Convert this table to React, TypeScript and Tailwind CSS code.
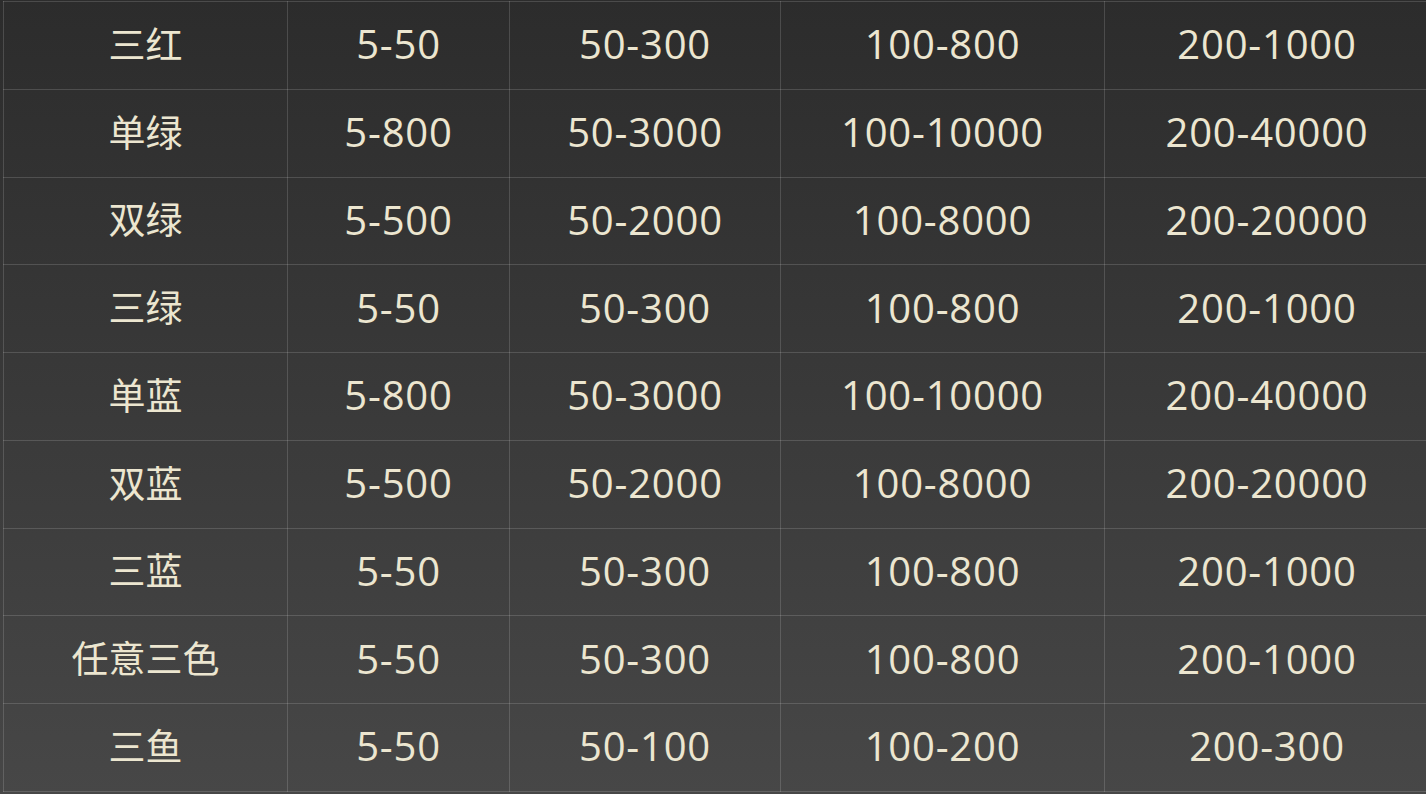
const rows: [string, string, string, string, string][] = [
  ['三红', '5-50', '50-300', '100-800', '200-1000'],
  ['单绿', '5-800', '50-3000', '100-10000', '200-40000'],
  ['双绿', '5-500', '50-2000', '100-8000', '200-20000'],
  ['三绿', '5-50', '50-300', '100-800', '200-1000'],
  ['单蓝', '5-800', '50-3000', '100-10000', '200-40000'],
  ['双蓝', '5-500', '50-2000', '100-8000', '200-20000'],
  ['三蓝', '5-50', '50-300', '100-800', '200-1000'],
  ['任意三色', '5-50', '50-300', '100-800', '200-1000'],
  ['三鱼', '5-50', '50-100', '100-200', '200-300'],
]

export default function App() {
  return (
    <div
      className="h-[794px] w-[1426px] overflow-hidden bg-gradient-to-b from-[#2c2c2c] to-[#474747] pl-[3px] pt-px text-[#ece6d0]"
      style={{ fontFamily: '"Open Sans", "Noto Sans CJK SC", sans-serif' }}
    >
      <table className="w-[1432px] table-fixed border-collapse">
        <colgroup>
          <col className="w-[284px]" />
          <col className="w-[222px]" />
          <col className="w-[271px]" />
          <col className="w-[324px]" />
          <col className="w-[331px]" />
        </colgroup>
        <tbody>
          {rows.map((r, i) => (
            <tr key={i} className="h-[87.75px]">
              <td className="border border-white/15 pb-[2px] text-center text-[37px] leading-none">
                {r[0]}
              </td>
              {r.slice(1).map((v, j) => (
                <td
                  key={j}
                  className={
                    j === 3
                      ? 'border border-white/15 pb-[2px] pr-[6px] text-center text-[40px] leading-none tracking-[0.8px]'
                      : 'border border-white/15 pb-[2px] text-center text-[40px] leading-none tracking-[0.8px]'
                  }
                >
                  {v}
                </td>
              ))}
            </tr>
          ))}
        </tbody>
      </table>
    </div>
  )
}
